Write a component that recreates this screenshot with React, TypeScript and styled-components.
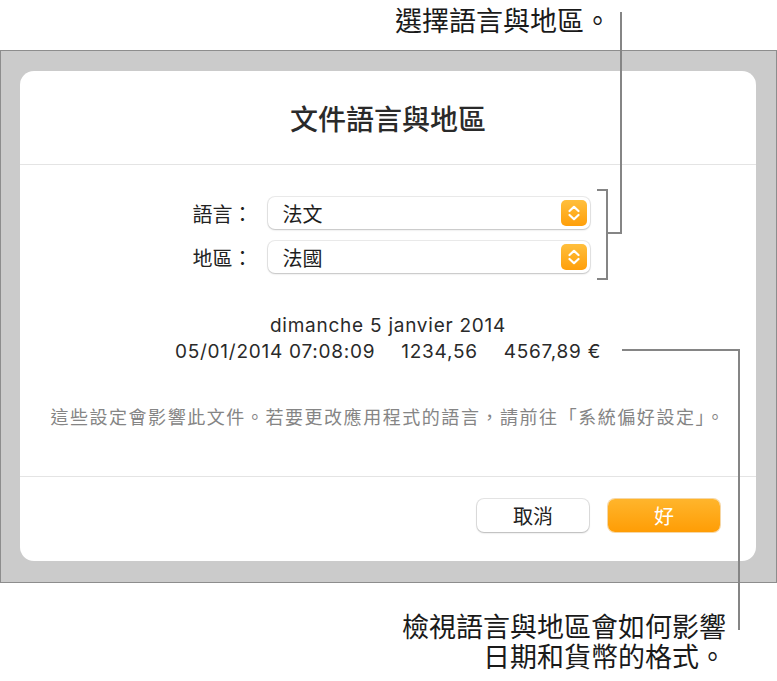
import React from "react";
import styled, { createGlobalStyle } from "styled-components";

const CJK = `"Noto Sans CJK TC", "Noto Sans", sans-serif`;
const LATIN = `Inter, "Noto Sans CJK TC", sans-serif`;

const GlobalStyle = createGlobalStyle`
  html, body {
    margin: 0;
    padding: 0;
    background: #ffffff;
  }
  body {
    font-family: ${CJK};
    color: #1d1d1d;
  }
`;

const Page = styled.div`
  position: relative;
  width: 777px;
  height: 681px;
  overflow: hidden;
`;

const TopCallout = styled.div`
  height: 50px;
  box-sizing: border-box;
  padding: 0 166px 0 0;
  display: flex;
  justify-content: flex-end;
  font-size: 27px;
  line-height: 39px;
  color: #1a1a1a;
`;

const Frame = styled.div`
  height: 533px;
  box-sizing: border-box;
  border: 1px solid #8d8d8d;
  background: #cbcbcb;
  padding: 20px 20px 21px 19px;
  display: flex;
`;

const Card = styled.div`
  flex: 1;
  background: #ffffff;
  border-radius: 14px;
  display: flex;
  flex-direction: column;
`;

const Header = styled.div`
  height: 93px;
  border-bottom: 1px solid #e4e4e4;
  display: flex;
  align-items: center;
  justify-content: center;
`;

const Title = styled.h1`
  margin: 0;
  font-size: 28px;
  font-weight: 500;
  color: #2a2a2a;
  line-height: 1;
`;

const Body = styled.div`
  height: 312px;
  border-bottom: 1px solid #e4e4e4;
  display: flex;
  flex-direction: column;
  align-items: center;
  padding-top: 32px;
  box-sizing: border-box;
`;

const FormGrid = styled.div`
  display: grid;
  grid-template-columns: auto 322px;
  column-gap: 15px;
  row-gap: 12px;
  align-items: center;
  margin-left: 6px;
`;

const Label = styled.label`
  font-size: 20px;
  color: #222;
  text-align: right;
`;

const Select = styled.div`
  height: 32px;
  box-sizing: border-box;
  border-radius: 7px;
  background: #fff;
  box-shadow: 0 0 0 1px rgba(0, 0, 0, 0.08), 0 1px 2px rgba(0, 0, 0, 0.18);
  display: flex;
  align-items: center;
  justify-content: space-between;
  padding: 0 3px 0 15px;
  font-size: 20px;
  color: #1d1d1d;
`;

const Stepper = styled.span`
  width: 26px;
  height: 26px;
  border-radius: 5px;
  background: linear-gradient(#ffbf3d, #ff9f0a);
  display: flex;
  align-items: center;
  justify-content: center;
`;

const Sample = styled.div`
  margin-top: 40px;
  font-family: ${LATIN};
  font-size: 19px;
  letter-spacing: 0.75px;
  line-height: 26px;
  color: #2a2a2a;
  display: flex;
  flex-direction: column;
  align-items: center;
`;

const SampleRow = styled.div`
  display: flex;
  gap: 26px;
`;

const Note = styled.p`
  margin: 39px 0 0;
  font-size: 18px;
  letter-spacing: 1.55px;
  line-height: 24px;
  color: #858585;
`;

const Footer = styled.div`
  flex: 1;
  display: flex;
  justify-content: flex-end;
  align-items: flex-start;
  gap: 19px;
  padding: 22px 36px 0 0;
`;

const Button = styled.button<{ $primary?: boolean }>`
  width: 112px;
  height: 33px;
  border-radius: 7px;
  border: none;
  font-family: ${CJK};
  font-size: 20px;
  line-height: 1;
  color: ${(p) => (p.$primary ? "#ffffff" : "#222222")};
  background: ${(p) =>
    p.$primary ? "linear-gradient(#ffb52c, #ff9d05)" : "#ffffff"};
  box-shadow: ${(p) =>
    p.$primary
      ? "0 0 0 1px rgba(230, 140, 0, 0.35)"
      : "0 0 0 1px rgba(0, 0, 0, 0.1), 0 1px 2px rgba(0, 0, 0, 0.2)"};
`;

const BottomCallout = styled.div`
  margin-top: 28px;
  padding-right: 51px;
  display: flex;
  flex-direction: column;
  align-items: flex-end;
  font-size: 27px;
  line-height: 30px;
  color: #1a1a1a;
`;

const Leaders = styled.svg`
  position: absolute;
  left: 0;
  top: 0;
  pointer-events: none;
`;

function Chevrons() {
  return (
    <svg width="26" height="26" viewBox="0 0 26 26">
      <path
        d="M8.5 11 L13 6.8 L17.5 11 M8.5 15 L13 19.2 L17.5 15"
        fill="none"
        stroke="#fff"
        strokeWidth="2.2"
        strokeLinecap="round"
        strokeLinejoin="round"
      />
    </svg>
  );
}

export default function App() {
  return (
    <>
      <GlobalStyle />
      <Page>
        <TopCallout>選擇語言與地區。</TopCallout>
        <Frame>
          <Card>
            <Header>
              <Title>文件語言與地區</Title>
            </Header>
            <Body>
              <FormGrid>
                <Label>語言：</Label>
                <Select>
                  法文
                  <Stepper>
                    <Chevrons />
                  </Stepper>
                </Select>
                <Label>地區：</Label>
                <Select>
                  法國
                  <Stepper>
                    <Chevrons />
                  </Stepper>
                </Select>
              </FormGrid>
              <Sample>
                <div>dimanche 5 janvier 2014</div>
                <SampleRow>
                  <span>05/01/2014 07:08:09</span>
                  <span>1234,56</span>
                  <span>4567,89 €</span>
                </SampleRow>
              </Sample>
              <Note>
                這些設定會影響此文件。若要更改應用程式的語言，請前往「系統偏好設定」。
              </Note>
            </Body>
            <Footer>
              <Button>取消</Button>
              <Button $primary>好</Button>
            </Footer>
          </Card>
        </Frame>
        <BottomCallout>
          <span>檢視語言與地區會如何影響</span>
          <span>日期和貨幣的格式。</span>
        </BottomCallout>
        <Leaders width="777" height="681" viewBox="0 0 777 681">
          <g fill="none" stroke="#858585" strokeWidth="2">
            <path d="M597 190 H607 V279 H597" />
            <path d="M607 233 H621 V12" />
            <path d="M622 350 H739 V630" />
          </g>
        </Leaders>
      </Page>
    </>
  );
}
